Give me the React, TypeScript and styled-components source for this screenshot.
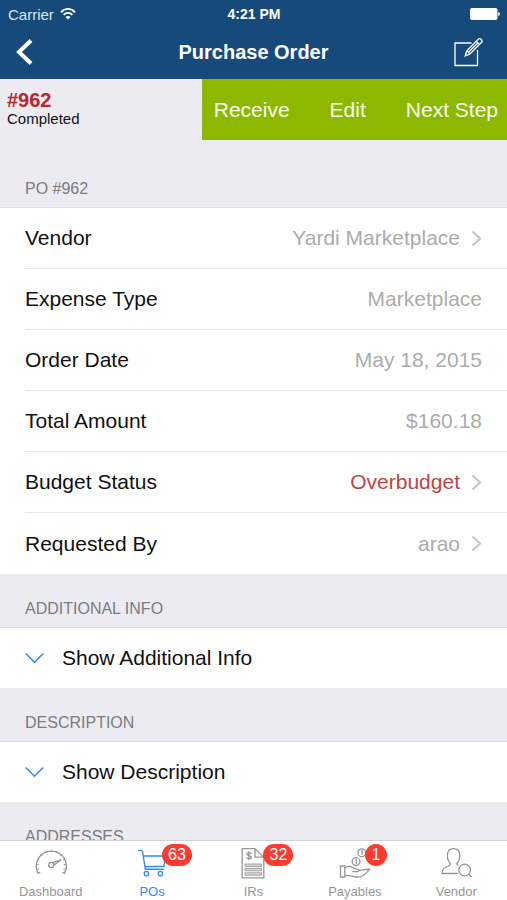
import React from "react";
import styled, { createGlobalStyle } from "styled-components";

const color = {
  navy: "#164a7b",
  green: "#8cb900",
  red: "#b9262e",
  overbudget: "#c0443f",
  badge: "#ff3b30",
  blue: "#2f8ded",
  ground: "#ecebf1",
  line: "#dfdfe3",
  text: "#111111",
  value: "#acacac",
  heading: "#7b7b80",
  tab: "#969696",
};

const GlobalStyle = createGlobalStyle`
  * { box-sizing: border-box; }
  body {
    margin: 0;
    font-family: "Liberation Sans", Arial, sans-serif;
    color: ${color.text};
    background: ${color.ground};
  }
  button { font: inherit; color: inherit; background: none; border: 0; padding: 0; cursor: pointer; }
  svg { display: block; flex: none; }
`;

const Screen = styled.div`
  display: flex;
  flex-direction: column;
  height: 100vh;
  overflow: hidden;
`;

const TopBar = styled.header`
  flex: none;
  background: ${color.navy};
  color: #fff;
`;

const StatusBar = styled.div`
  display: grid;
  grid-template-columns: 1fr auto 1fr;
  align-items: center;
  height: 28px;
  padding: 0 7px 0 8px;
  font-size: 15px;
`;

const Carrier = styled.div`
  display: flex;
  align-items: center;
  gap: 6px;
  color: #dce6ef;
`;

const Clock = styled.time`
  font-size: 14px;
  font-weight: bold;
`;

const Battery = styled.div`
  justify-self: end;
`;

const NavBar = styled.div`
  display: grid;
  grid-template-columns: 1fr auto 1fr;
  align-items: center;
  height: 51px;
  padding-bottom: 4px;
`;

const Title = styled.h1`
  margin: 0;
  font-size: 20px;
  line-height: 24px;
`;

const NavButton = styled.button<{ $end?: boolean }>`
  justify-self: ${(p) => (p.$end ? "end" : "start")};
  && { padding: 0 24px 0 16px; }
`;

const ActionBar = styled.div`
  flex: none;
  display: flex;
  height: 61px;
`;

const Order = styled.div`
  flex: 1;
  padding: 11px 7px;
`;

const OrderNumber = styled.div`
  font-size: 20px;
  line-height: 20px;
  font-weight: bold;
  color: ${color.red};
`;

const OrderState = styled.div`
  font-size: 15px;
  line-height: 18px;
`;

const Actions = styled.div`
  display: flex;
  align-items: center;
  gap: 40px;
  padding: 0 9px 0 12px;
  background: ${color.green};
  color: #fbfdf0;
  font-size: 21px;
`;

const Content = styled.main`
  flex: 1;
  min-height: 0;
  overflow: hidden;
`;

const SectionTitle = styled.h2<{ $tall?: boolean }>`
  display: flex;
  align-items: flex-end;
  height: ${(p) => (p.$tall ? 68 : 54)}px;
  margin: 0;
  padding: 0 25px 9px;
  border-bottom: 1px solid ${color.line};
  font-size: 16px;
  line-height: 18px;
  font-weight: normal;
  color: ${color.heading};
`;

const Group = styled.div`
  background: #fff;
`;

const Row = styled.div`
  display: flex;
  align-items: center;
  justify-content: space-between;
  width: calc(100% - 25px);
  height: 61px;
  margin-left: 25px;
  padding-right: 25px;
  border-bottom: 1px solid #e6e6e8;
  font-size: 21px;
  text-align: left;
  &:last-child { border-bottom: 0; }
`;

const RowButton = styled(Row).attrs({ as: "button" })`
  && {
    padding-right: 25px;
    font-size: 21px;
  }
`;

const Value = styled.span<{ $alert?: boolean }>`
  display: flex;
  align-items: center;
  gap: 11px;
  color: ${(p) => (p.$alert ? color.overbudget : color.value)};
`;

const Toggle = styled.button`
  display: flex;
  align-items: center;
  gap: 18px;
  width: 100%;
  height: 60px;
  padding: 0 25px;
  font-size: 21px;
`;

const TabBar = styled.nav`
  flex: none;
  display: grid;
  grid-template-columns: repeat(5, 1fr);
  height: 60px;
  background: #fff;
  border-top: 1px solid #d2d2d6;
`;

const Tab = styled.button<{ $active?: boolean }>`
  display: flex;
  flex-direction: column;
  align-items: center;
  gap: 5px;
  padding-top: 6px;
  font-size: 13px;
  line-height: 16px;
  color: ${(p) => (p.$active ? color.blue : color.tab)};
`;

const IconBox = styled.span`
  position: relative;
`;

const Badge = styled.span`
  position: absolute;
  top: -3px;
  left: 26px;
  min-width: 22px;
  height: 22px;
  padding: 0 6px;
  border-radius: 11px;
  background: ${color.badge};
  color: #fff;
  font-size: 16px;
  line-height: 22px;
  text-align: center;
`;

const Wifi = () => (
  <svg width="16" height="12" viewBox="0 0 16 12" fill="none" stroke="#fff" strokeWidth="1.8">
    <path d="M1 4.4C5-.2 11-.2 15 4.4M3.6 6.9c2.5-2.7 6.3-2.7 8.8 0" />
    <path d="M8 11.6 5.5 9c1.4-1.3 3.6-1.3 5 0z" fill="#fff" stroke="none" />
  </svg>
);

const BatteryIcon = () => (
  <svg width="30" height="12" viewBox="0 0 30 12" fill="#fff">
    <rect width="27.5" height="12" rx="2" />
    <path d="M28.2 4v4c2.2-.6 2.2-3.4 0-4z" />
  </svg>
);

const BackIcon = () => (
  <svg width="17" height="26" viewBox="0 0 17 26" fill="none" stroke="#fff" strokeWidth="4">
    <path d="M15 1.5 3 13l12 11.5" />
  </svg>
);

const ComposeIcon = () => (
  <svg width="29" height="30" viewBox="0 0 29 30" fill="none" stroke="#fff" strokeWidth="1.3">
    <path d="M17.5 6H1v22.5h22.5V13" />
    <path d="m11.2 18.8 1.6-5L24.4 2.1c1.5-1.5 4.8 1.4 3.2 3.2L16 17z" />
    <path d="m22.3 4.2 3.2 3.2M12.8 13.8 16 17M14.5 15.2 24 5.7" />
  </svg>
);

const ChevronRight = () => (
  <svg width="11" height="17" viewBox="0 0 11 17" fill="none" stroke="#c4c4c8" strokeWidth="2">
    <path d="m1.5 1.5 7.7 7-7.7 7" />
  </svg>
);

const ChevronDown = () => (
  <svg width="19" height="12" viewBox="0 0 19 12" fill="none" stroke={color.blue} strokeWidth="1.6">
    <path d="m.7 1.5 8.8 8.7 8.8-8.7" />
  </svg>
);

const TabIcon = ({ children }: { children: React.ReactNode }) => (
  <svg width="32" height="32" viewBox="0 0 32 32" fill="none" stroke="currentColor" strokeWidth="1.3">
    {children}
  </svg>
);

const Gauge = () => (
  <TabIcon>
    <path d="M3.2 26.4a15 15 0 1 1 26.2 0l-2-1.2M3.2 26.4l2-1.2" />
    <path d="M1.4 17.6h2.4M5.8 7.2l1.7 1.7M16.3 2.6V5M26.9 7.2l-1.7 1.7M31.1 17.6h-2.4M2.5 12l2.1.9M10.6 3.9l.9 2.1M22 3.9 21.1 6M30.1 12l-2.1.9M2.3 22.5l2.1-.7M30.3 22.5l-2.1-.7" strokeWidth=".9" />
    <circle cx="16.3" cy="18" r="2.6" />
    <path d="m17.6 15.7 8.4-2.9-6.9 5.1" />
  </TabIcon>
);

const Cart = () => (
  <TabIcon>
    <path d="M2 3.4h3.5L6.7 5l2.6 17.3h18.4M7.4 9h22.2l-1.7 10.3-19 .5" strokeWidth="1.4" />
    <circle cx="10.4" cy="26.6" r="2.2" />
    <circle cx="24.4" cy="26.6" r="2.2" />
  </TabIcon>
);

const Invoice = () => (
  <TabIcon>
    <path d="M18 1.6H5.2v29.2h21.6V10.2zM18 1.6v8.6h8.8" />
    <path d="M14.2 6.7c-.6-1.6-4.4-1.5-4.4.3 0 2 4.6 1.2 4.6 3.3 0 1.9-4.2 2-4.9.1M12 4.2v9" />
    <path d="M8 17h16.5v2.4H8zM8 21.4h16.5v2.4H8zM8 25.8h16.5v2.4H8z" fill="currentColor" fillOpacity=".35" strokeWidth=".9" />
  </TabIcon>
);

const Payables = () => (
  <TabIcon>
    <path d="M1.5 19h4.3v11H1.5z" />
    <path d="M5.8 21c2.7-1.8 5.2-2 7.3-.8 1.4.8 2.4 1.6 4.2 1.6 2.8 0 3.6 2.4 1.2 2.9h-5.2M20 23.5c3.4-.2 6.2-1.6 10.6-1.2-2.2 2.8-4.4 4.8-7 6.4-2.9 1.8-7.5 1.3-10.6.4-2.8-.8-4.5-.8-7.2-.8" />
    <circle cx="17" cy="14.6" r="3.9" />
    <circle cx="22.8" cy="5.8" r="3.9" />
    <path d="M16.2 13.2l1-.6v4.2M22 4.4l1-.6V8" />
  </TabIcon>
);

const Person = () => (
  <TabIcon>
    <path d="M18.2 26.5H2c.2-3.6 1.2-5 3.4-6 2.8-1.1 5-2 5-4-2.2-2-3-4.6-3-8 0-4.4 2.4-6.8 6.2-6.8s6.2 2.4 6.2 6.8c0 3.4-.8 6-3 8 0 .9.5 1.6 1.4 2.2" />
    <circle cx="24.6" cy="23" r="5.8" />
    <path d="m28.8 27.2 2.7 2.7" strokeWidth="1.5" />
  </TabIcon>
);

type Field = { label: string; value: string; link?: boolean; alert?: boolean };

const fields: Field[] = [
  { label: "Vendor", value: "Yardi Marketplace", link: true },
  { label: "Expense Type", value: "Marketplace" },
  { label: "Order Date", value: "May 18, 2015" },
  { label: "Total Amount", value: "$160.18" },
  { label: "Budget Status", value: "Overbudget", link: true, alert: true },
  { label: "Requested By", value: "arao", link: true },
];

const tabs = [
  { label: "Dashboard", icon: <Gauge /> },
  { label: "POs", icon: <Cart />, badge: 63, active: true },
  { label: "IRs", icon: <Invoice />, badge: 32 },
  { label: "Payables", icon: <Payables />, badge: 1 },
  { label: "Vendor", icon: <Person /> },
];

const FieldRow = ({ label, value, link, alert }: Field) => {
  const Line = link ? RowButton : Row;
  return (
    <Line>
      <span>{label}</span>
      <Value $alert={alert}>
        {value}
        {link && <ChevronRight />}
      </Value>
    </Line>
  );
};

export default function App() {
  return (
    <Screen>
      <GlobalStyle />
      <TopBar>
        <StatusBar>
          <Carrier>Carrier <Wifi /></Carrier>
          <Clock>4:21 PM</Clock>
          <Battery><BatteryIcon /></Battery>
        </StatusBar>
        <NavBar>
          <NavButton aria-label="Back"><BackIcon /></NavButton>
          <Title>Purchase Order</Title>
          <NavButton $end aria-label="Compose"><ComposeIcon /></NavButton>
        </NavBar>
      </TopBar>
      <ActionBar>
        <Order>
          <OrderNumber>#962</OrderNumber>
          <OrderState>Completed</OrderState>
        </Order>
        <Actions>
          <button>Receive</button>
          <button>Edit</button>
          <button>Next Step</button>
        </Actions>
      </ActionBar>
      <Content>
        <SectionTitle $tall>PO #962</SectionTitle>
        <Group>
          {fields.map((f) => <FieldRow key={f.label} {...f} />)}
        </Group>
        <SectionTitle>ADDITIONAL INFO</SectionTitle>
        <Group>
          <Toggle aria-expanded={false}><ChevronDown />Show Additional Info</Toggle>
        </Group>
        <SectionTitle>DESCRIPTION</SectionTitle>
        <Group>
          <Toggle aria-expanded={false}><ChevronDown />Show Description</Toggle>
        </Group>
        <SectionTitle>ADDRESSES</SectionTitle>
      </Content>
      <TabBar>
        {tabs.map((t) => (
          <Tab key={t.label} $active={t.active} aria-current={t.active ? "page" : undefined}>
            <IconBox>
              {t.icon}
              {t.badge && <Badge>{t.badge}</Badge>}
            </IconBox>
            {t.label}
          </Tab>
        ))}
      </TabBar>
    </Screen>
  );
}
